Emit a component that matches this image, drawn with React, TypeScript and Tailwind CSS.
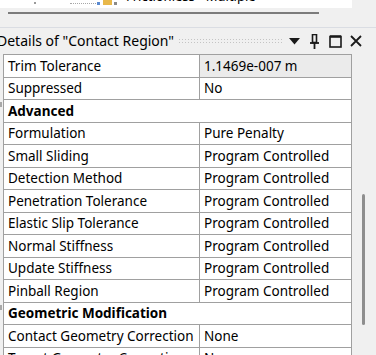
import React from "react";

type Row =
  | { kind: "prop"; label: string; value: string; readonly?: boolean }
  | { kind: "group"; label: string };

const rows: Row[] = [
  { kind: "prop", label: "Trim Tolerance", value: "1.1469e-007 m", readonly: true },
  { kind: "prop", label: "Suppressed", value: "No" },
  { kind: "group", label: "Advanced" },
  { kind: "prop", label: "Formulation", value: "Pure Penalty" },
  { kind: "prop", label: "Small Sliding", value: "Program Controlled" },
  { kind: "prop", label: "Detection Method", value: "Program Controlled" },
  { kind: "prop", label: "Penetration Tolerance", value: "Program Controlled" },
  { kind: "prop", label: "Elastic Slip Tolerance", value: "Program Controlled" },
  { kind: "prop", label: "Normal Stiffness", value: "Program Controlled" },
  { kind: "prop", label: "Update Stiffness", value: "Program Controlled" },
  { kind: "prop", label: "Pinball Region", value: "Program Controlled" },
  { kind: "group", label: "Geometric Modification" },
  { kind: "prop", label: "Contact Geometry Correction", value: "None" },
  { kind: "prop", label: "Target Geometry Correction", value: "None" },
];

export default function App() {
  return (
    <div className="w-[376px] h-[355px] overflow-hidden bg-[#f0f0f0] text-black font-['Noto_Sans','Open_Sans',sans-serif]">
      {/* top clipped tree strip */}
      <div className="w-[352px] h-[8px] bg-white overflow-hidden flex items-end relative">
        <div className="flex items-end h-[8px] pl-[34px] gap-0">
          <div className="w-[2px] h-[2px] bg-[#9a9a9a] mb-[4px]" />
          <div className="ml-[34px] w-[26px] h-[1px] mb-[4px] border-t border-dotted border-[#a8a8a8]" />
          <div className="ml-[1px] w-[3px] h-[3px] bg-[#5a8ad0] mb-[3px]" />
          <div className="ml-[3px] w-[9px] h-[5px] bg-[#e8b84a] mb-[3px]" />
          <div className="ml-[2px] w-[3px] h-[3px] bg-[#8a8a8a] mb-[3px]" />
          <div className="ml-[9px] h-[8px] overflow-hidden relative w-[140px]">
            <div className="absolute left-0 top-[-12px] text-[13px] leading-[16px] whitespace-nowrap">Frictionless - Multiple</div>
          </div>
        </div>
      </div>
      {/* horizontal scrollbar line */}
      <div className="mt-[4px] ml-[8px] w-[311px] h-[2px] bg-[#7c7c7c]" />
      {/* panel top border */}
      <div className="mt-[13px] h-[1px] bg-[#dadde3]" />
      {/* header */}
      <div className="h-[26px] flex items-center pr-[14px]">
        <div className="-ml-[3px] w-[181px] text-[14px] leading-[20px] whitespace-nowrap">
          Details of "Contact Region"
        </div>
        <div className="flex-1 h-[6px] bg-[radial-gradient(#c4c4c4_0.8px,transparent_0.9px)] bg-[length:3px_3px]" />
        <svg width="11" height="7" viewBox="0 0 11 7" className="ml-[5px]">
          <polygon points="0,0 11,0 5.5,6.5" fill="#1a1a1a" />
        </svg>
        <svg width="9" height="15" viewBox="0 0 9 15" className="ml-[10px]">
          <rect x="2.5" y="0.5" width="4" height="8" fill="none" stroke="#1a1a1a" strokeWidth="1.6" />
          <line x1="0" y1="9" x2="9" y2="9" stroke="#1a1a1a" strokeWidth="1.8" />
          <line x1="4.5" y1="9" x2="4.5" y2="15" stroke="#1a1a1a" strokeWidth="1.8" />
        </svg>
        <svg width="13" height="13" viewBox="0 0 13 13" className="ml-[10px]">
          <rect x="1" y="1.5" width="11" height="10.5" fill="none" stroke="#1a1a1a" strokeWidth="1.6" />
          <line x1="1" y1="1.5" x2="12" y2="1.5" stroke="#1a1a1a" strokeWidth="2.4" />
        </svg>
        <svg width="12" height="12" viewBox="0 0 12 12" className="ml-[8px]">
          <path d="M1 1 L11 11 M11 1 L1 11" stroke="#1a1a1a" strokeWidth="1.8" />
        </svg>
      </div>
      {/* body */}
      <div className="flex">
        <div className="w-[352px] text-[13.5px]">
          <div className="border-t border-[#a0a0a0] ml-[3px] w-[349px]" />
          {rows.map((r, i) => (
            <div key={i} className="flex h-[22.5px]">
              <div className="w-[3px] flex items-center">
                {r.kind === "group" && <div className="w-[2px] h-[5px] bg-[#a8a8a8] -mt-[13px]" />}
              </div>
              {r.kind === "group" ? (
                <div className="flex-1 bg-white border-l border-r border-b border-[#a0a0a0] flex items-center pl-[4px] font-bold whitespace-nowrap">
                  {r.label}
                </div>
              ) : (
                <>
                  <div className="w-[197px] bg-white border-l border-r border-b border-[#a0a0a0] flex items-center pl-[4px] whitespace-nowrap overflow-hidden">
                    {r.label}
                  </div>
                  <div
                    className={
                      "flex-1 border-r border-b border-[#a0a0a0] flex items-center pl-[4px] whitespace-nowrap " +
                      (r.readonly ? "bg-[#ebebeb]" : "bg-white")
                    }
                  >
                    {r.value}
                  </div>
                </>
              )}
            </div>
          ))}
        </div>
        <div className="flex-1 flex justify-center">
          <div className="mt-[140px] ml-[-1px] w-[3px] h-[131px] rounded-full bg-[#8e8e8e]" />
        </div>
      </div>
    </div>
  );
}
